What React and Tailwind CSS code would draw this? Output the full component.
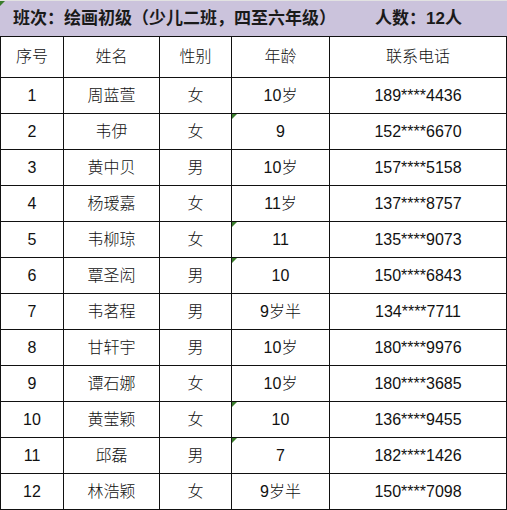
import React from "react";

const students = [
  { no: 1, name: "周蓝萱", sex: "女", age: "10岁", phone: "189****4436" },
  { no: 2, name: "韦伊", sex: "女", age: "9", phone: "152****6670", flag: true },
  { no: 3, name: "黄中贝", sex: "男", age: "10岁", phone: "157****5158" },
  { no: 4, name: "杨瑷嘉", sex: "女", age: "11岁", phone: "137****8757" },
  { no: 5, name: "韦柳琼", sex: "女", age: "11", phone: "135****9073", flag: true },
  { no: 6, name: "覃圣闳", sex: "男", age: "10", phone: "150****6843", flag: true },
  { no: 7, name: "韦茗程", sex: "男", age: "9岁半", phone: "134****7711" },
  { no: 8, name: "甘轩宇", sex: "男", age: "10岁", phone: "180****9976" },
  { no: 9, name: "谭石娜", sex: "女", age: "10岁", phone: "180****3685" },
  { no: 10, name: "黄莹颖", sex: "女", age: "10", phone: "136****9455", flag: true },
  { no: 11, name: "邱磊", sex: "男", age: "7", phone: "182****1426", flag: true },
  { no: 12, name: "林浩颖", sex: "女", age: "9岁半", phone: "150****7098" },
];

// little green "number stored as text" marker, like in Excel
const Flag = () => (
  <span className="absolute left-0 top-0 h-0 w-0 border-t-[5px] border-r-[5px] border-t-[#3a7d2c] border-r-transparent" />
);

const cell = "border border-[#111] text-center align-middle p-0";

export default function App() {
  return (
    <div
      className="w-[507px] bg-white text-[#111]"
      style={{ fontFamily: '"Liberation Sans", "Noto Sans CJK SC", sans-serif' }}
    >
      {/* Title band */}
      <div className="relative flex h-[36px] items-center border-t border-[#e2e2e2] bg-[#cbc3dc] pl-[13px] text-[17px] font-bold text-[#1a1a1a]">
        <Flag />
        <span>班次：绘画初级（少儿二班，四至六年级）</span>
        <span className="ml-[39px]">人数：12人</span>
      </div>

      <table className="w-[506px] table-fixed border-collapse text-[16px] font-light">
        <colgroup>
          <col className="w-[63px]" />
          <col className="w-[96px]" />
          <col className="w-[72px]" />
          <col className="w-[98px]" />
          <col className="w-[177px]" />
        </colgroup>
        <thead>
          <tr className="h-[41px]">
            <th className={`${cell} font-light`}>序号</th>
            <th className={`${cell} font-light`}>姓名</th>
            <th className={`${cell} font-light`}>性别</th>
            <th className={`${cell} font-light`}>年龄</th>
            <th className={`${cell} font-light`}>联系电话</th>
          </tr>
        </thead>
        <tbody>
          {students.map((s) => (
            <tr key={s.no} className="h-[36px]">
              <td className={cell}>{s.no}</td>
              <td className={cell}>{s.name}</td>
              <td className={cell}>{s.sex}</td>
              <td className={`${cell} relative`}>
                {s.flag && <Flag />}
                {s.age}
              </td>
              <td className={cell}>{s.phone}</td>
            </tr>
          ))}
        </tbody>
      </table>
    </div>
  );
}
